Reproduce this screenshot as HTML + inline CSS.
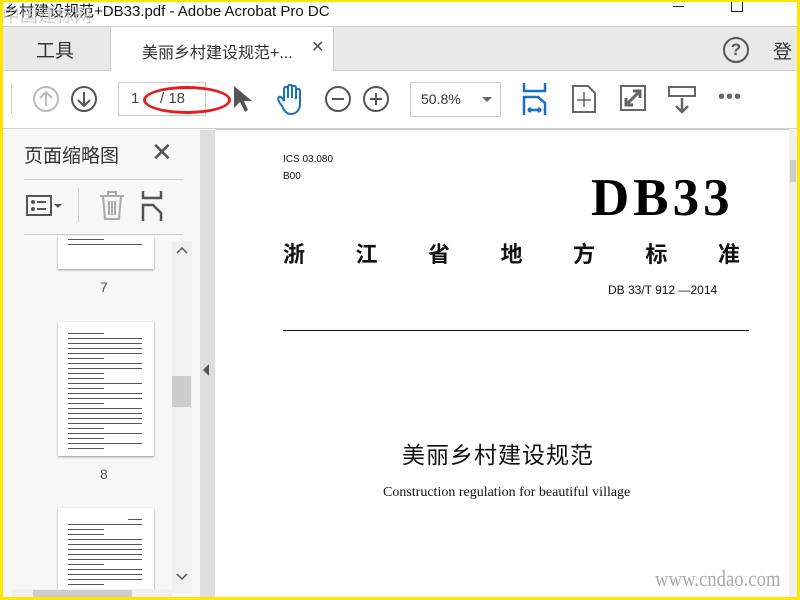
<!DOCTYPE html>
<html><head><meta charset="utf-8"><style>
*{margin:0;padding:0;box-sizing:border-box}
body{width:800px;height:600px;position:relative;overflow:hidden;background:#fff;font-family:"Liberation Sans","Noto Sans CJK SC",sans-serif}
.abs{position:absolute}
.cjk{font-family:"Liberation Sans","Noto Sans CJK SC",sans-serif}
.serif{font-family:"Liberation Serif","Noto Serif CJK SC",serif}
.thumb{position:absolute;background:#fff;box-shadow:0 1px 2px #999;left:58px;width:96px}
.ln{height:1px;background:#555;margin:4px 12px 0 10px}
.ln.s{margin-right:50px}
</style></head><body>
<div class="abs" style="left:0;top:0;width:800px;height:26px;background:#fff"></div>
<div class="abs cjk" style="left:4px;top:0;font-size:15px;color:#111;white-space:nowrap">乡村建设规范+DB33.pdf - Adobe Acrobat Pro DC</div>
<div class="abs cjk" style="left:2px;top:2px;font-size:18px;color:#bbb;opacity:.7">中国建标网</div>
<div class="abs" style="left:673px;top:6px;width:11px;height:1px;background:#222"></div>
<div class="abs" style="left:731px;top:0;width:12px;height:12px;border:1px solid #222;border-top:none"></div>
<div class="abs" style="left:0;top:26px;width:800px;height:45px;background:#e9e9e9;border-top:1px solid #d0d0d0;border-bottom:1px solid #d0d0d0"></div>
<div class="abs cjk" style="left:36px;top:36px;font-size:19px;color:#333">工具</div>
<div class="abs" style="left:110px;top:27px;width:224px;height:44px;background:#fff;border-left:1px solid #ccc;border-right:1px solid #ccc"></div>
<div class="abs cjk" style="left:142px;top:39px;font-size:16px;color:#333">美丽乡村建设规范+...</div>
<div class="abs" style="left:311px;top:37px;font-size:16px;color:#555">✕</div>
<div class="abs" style="left:723px;top:37px;width:26px;height:26px;border:2px solid #555;border-radius:50%;text-align:center;font-size:17px;font-weight:bold;line-height:22px;color:#555">?</div>
<div class="abs cjk" style="left:773px;top:37px;font-size:19px;color:#333">登</div>
<div class="abs" style="left:0;top:71px;width:800px;height:58px;background:#fff;border-bottom:1px solid #d0d0d0"></div>
<div class="abs" style="left:11px;top:84px;width:1px;height:30px;background:#ccc"></div>
<svg class="abs" style="left:33px;top:86px" width="26" height="26"><circle cx="13" cy="13" r="12" fill="none" stroke="#bbb" stroke-width="2"/><path d="M13 20 V6 M7 12 L13 6 L19 12" fill="none" stroke="#bbb" stroke-width="2"/></svg>
<svg class="abs" style="left:71px;top:86px" width="26" height="26"><circle cx="13" cy="13" r="12" fill="none" stroke="#555" stroke-width="2"/><path d="M13 6 V20 M7 14 L13 20 L19 14" fill="none" stroke="#555" stroke-width="2"/></svg>
<div class="abs" style="left:118px;top:82px;width:88px;height:34px;border:1px solid #ccc"></div>
<div class="abs" style="left:131px;top:90px;font-size:15px;color:#444">1</div>
<div class="abs" style="left:160px;top:90px;font-size:15px;color:#444">/ 18</div>
<div class="abs" style="left:143px;top:86px;width:88px;height:28px;border:3px solid #e02020;border-radius:50%"></div>
<svg class="abs" style="left:231px;top:84px" width="22" height="30"><path d="M3 2 L3 24 L9 18 L14 28 L17 26 L13 17 L21 17 Z" fill="#555"/></svg>
<svg class="abs" style="left:274px;top:84px" width="30" height="32"><path d="M8 22 C5 18 3 15 5 13 C7 12 9 15 10 17 L10 5 C10 2 14 2 14 5 L14 14 L14 3 C14 0 18 0 18 3 L18 14 L18 4 C18 1 22 1 22 4 L22 15 L22 7 C22 4 26 4 26 7 L26 20 C26 26 22 30 17 30 C13 30 10 27 8 22 Z" fill="none" stroke="#1b6ec2" stroke-width="2"/></svg>
<svg class="abs" style="left:325px;top:86px" width="26" height="26"><circle cx="13" cy="13" r="12" fill="none" stroke="#555" stroke-width="2"/><path d="M7 13 H19" stroke="#555" stroke-width="2"/></svg>
<svg class="abs" style="left:363px;top:86px" width="26" height="26"><circle cx="13" cy="13" r="12" fill="none" stroke="#555" stroke-width="2"/><path d="M7 13 H19 M13 7 V19" stroke="#555" stroke-width="2"/></svg>
<div class="abs" style="left:410px;top:82px;width:91px;height:35px;border:1px solid #ccc"></div>
<div class="abs" style="left:421px;top:91px;font-size:14px;color:#333">50.8%</div>
<div class="abs" style="left:482px;top:97px;border:5px solid transparent;border-top:5px solid #666"></div>
<svg class="abs" style="left:522px;top:83px" width="26" height="32"><path d="M2 0 V8 H23 V0 M2 32 V14 H16 L23 20 V32 M6 27 H19 M6 27 l3 -2 M6 27 l3 2 M19 27 l-3 -2 M19 27 l-3 2" fill="none" stroke="#1b6ec2" stroke-width="2.5"/></svg>
<svg class="abs" style="left:572px;top:85px" width="24" height="28"><path d="M1 1 H16 L23 8 V27 H1 Z" fill="none" stroke="#666" stroke-width="2"/><path d="M12 7 V22 M5 15 H19" stroke="#666" stroke-width="1.5"/></svg>
<svg class="abs" style="left:620px;top:85px" width="26" height="26"><rect x="1" y="1" width="24" height="24" fill="none" stroke="#666" stroke-width="2"/><path d="M6 20 L20 6 M13 6 H20 V13 M6 13 V20 H13" fill="none" stroke="#666" stroke-width="3"/></svg>
<svg class="abs" style="left:668px;top:86px" width="28" height="28"><rect x="1" y="1" width="26" height="9" fill="none" stroke="#666" stroke-width="2"/><path d="M14 12 V26 M8 20 L14 26 L20 20" fill="none" stroke="#666" stroke-width="2.5"/></svg>
<div class="abs" style="left:718px;top:86px;font-size:20px;color:#666;letter-spacing:1px">•••</div>
<div class="abs" style="left:0;top:130px;width:200px;height:470px;background:#f7f7f7"></div>
<div class="abs cjk" style="left:24px;top:141px;font-size:19px;color:#333">页面缩略图</div>
<div class="abs" style="left:151px;top:137px;font-size:26px;color:#555">✕</div>
<div class="abs" style="left:24px;top:179px;width:159px;height:1px;background:#ccc"></div>
<svg class="abs" style="left:26px;top:194px" width="40" height="24"><rect x="1" y="2" width="24" height="19" fill="none" stroke="#555" stroke-width="2"/><circle cx="7" cy="8" r="2" fill="#555"/><circle cx="7" cy="15" r="2" fill="#555"/><path d="M11 8 H20 M11 15 H20" stroke="#555" stroke-width="2"/><path d="M28 10 L36 10 L32 14 Z" fill="#555"/></svg>
<div class="abs" style="left:78px;top:188px;width:1px;height:34px;background:#ccc"></div>
<svg class="abs" style="left:99px;top:191px" width="26" height="30"><path d="M1 5 H25 M9 5 V1 H17 V5 M4 5 L6 28 H20 L22 5 M10 10 V24 M13 10 V24 M16 10 V24" fill="none" stroke="#aaa" stroke-width="2"/></svg>
<svg class="abs" style="left:141px;top:191px" width="22" height="30"><path d="M2 0 V7 H20 V0 M2 30 V14 H12 L20 22 V30" fill="none" stroke="#555" stroke-width="2.5"/></svg>
<div class="abs" style="left:24px;top:234px;width:159px;height:1px;background:#ccc"></div>
<div class="thumb" style="top:236px;height:33px"><div class="ln s" style="margin-top:3px"></div><div class="ln"></div></div>
<div class="abs" style="left:100px;top:279px;font-size:14px;color:#555">7</div>
<div class="thumb" style="top:322px;height:134px;padding-top:7px"><div class="ln s"></div><div class="ln"></div><div class="ln"></div><div class="ln"></div><div class="ln"></div><div class="ln s"></div><div class="ln"></div><div class="ln"></div><div class="ln s"></div><div class="ln s"></div><div class="ln"></div><div class="ln s"></div><div class="ln"></div><div class="ln"></div><div class="ln s"></div><div class="ln"></div><div class="ln"></div><div class="ln"></div><div class="ln"></div><div class="ln s"></div><div class="ln"></div><div class="ln s"></div><div class="ln"></div><div class="ln s"></div></div>
<div class="abs" style="left:100px;top:466px;font-size:14px;color:#555">8</div>
<div class="thumb" style="top:508px;height:85px;padding-top:7px"><div class="ln" style="margin-left:70px"></div><div class="ln"></div><div class="ln s"></div><div class="ln s"></div><div class="ln"></div><div class="ln"></div><div class="ln"></div><div class="ln"></div><div class="ln"></div><div class="ln s"></div><div class="ln"></div><div class="ln"></div><div class="ln"></div><div class="ln s"></div><div class="ln"></div></div>
<div class="abs" style="left:172px;top:241px;width:20px;height:352px;background:#f0f0f0"></div>
<div class="abs" style="left:172px;top:376px;width:19px;height:31px;background:#cdcdcd"></div>
<svg class="abs" style="left:176px;top:246px" width="12" height="10"><path d="M1 7 L6 2 L11 7" fill="none" stroke="#555" stroke-width="1.5"/></svg>
<svg class="abs" style="left:176px;top:572px" width="12" height="10"><path d="M1 2 L6 7 L11 2" fill="none" stroke="#555" stroke-width="1.5"/></svg>
<div class="abs" style="left:12px;top:589px;width:160px;height:8px;background:#f0f0f0"></div>
<div class="abs" style="left:33px;top:590px;width:99px;height:7px;background:#cdcdcd"></div>
<div class="abs" style="left:200px;top:130px;width:15px;height:470px;background:#dedede"></div>
<div class="abs" style="left:203px;top:364px;border:6px solid transparent;border-right:6px solid #555;border-left:none"></div>
<div class="abs" style="left:215px;top:129px;width:575px;height:471px;background:#fff;border-top:1px solid #ccc"></div>
<div class="abs" style="left:789px;top:129px;width:8px;height:471px;background:#f0f0f0"></div>
<div class="abs" style="left:790px;top:160px;width:6px;height:22px;background:#cdcdcd"></div>
<div class="abs" style="left:283px;top:154px;font-size:10px;color:#111">ICS 03.080</div>
<div class="abs" style="left:283px;top:171px;font-size:10px;color:#111">B00</div>
<div class="abs serif" style="left:591px;top:168px;font-size:53px;font-weight:bold;color:#000;line-height:60px;letter-spacing:4px">DB33</div>
<div class="abs cjk" style="left:283px;top:237px;width:457px;display:flex;justify-content:space-between;font-size:22px;font-weight:bold;color:#111"><span>浙</span><span>江</span><span>省</span><span>地</span><span>方</span><span>标</span><span>准</span></div>
<div class="abs" style="left:608px;top:283px;font-size:12px;color:#111">DB 33/T 912 —2014</div>
<div class="abs" style="left:283px;top:330px;width:466px;height:1px;background:#111"></div>
<div class="abs cjk" style="left:402px;top:436px;font-size:23px;color:#111;letter-spacing:1px">美丽乡村建设规范</div>
<div class="abs serif" style="left:383px;top:485px;font-size:14px;color:#111;letter-spacing:0">Construction regulation for beautiful village</div>
<div class="abs serif" style="left:655px;top:566px;font-size:22px;color:#aaa;transform:scaleX(.85);transform-origin:left">www.cndao.com</div>
<div class="abs" style="left:0;top:0;width:800px;height:600px;border:3px solid #ffe600;border-top:none;pointer-events:none"></div>
<div class="abs" style="left:0;top:0;width:800px;height:2px;background:#ffe600"></div>
</body></html>
